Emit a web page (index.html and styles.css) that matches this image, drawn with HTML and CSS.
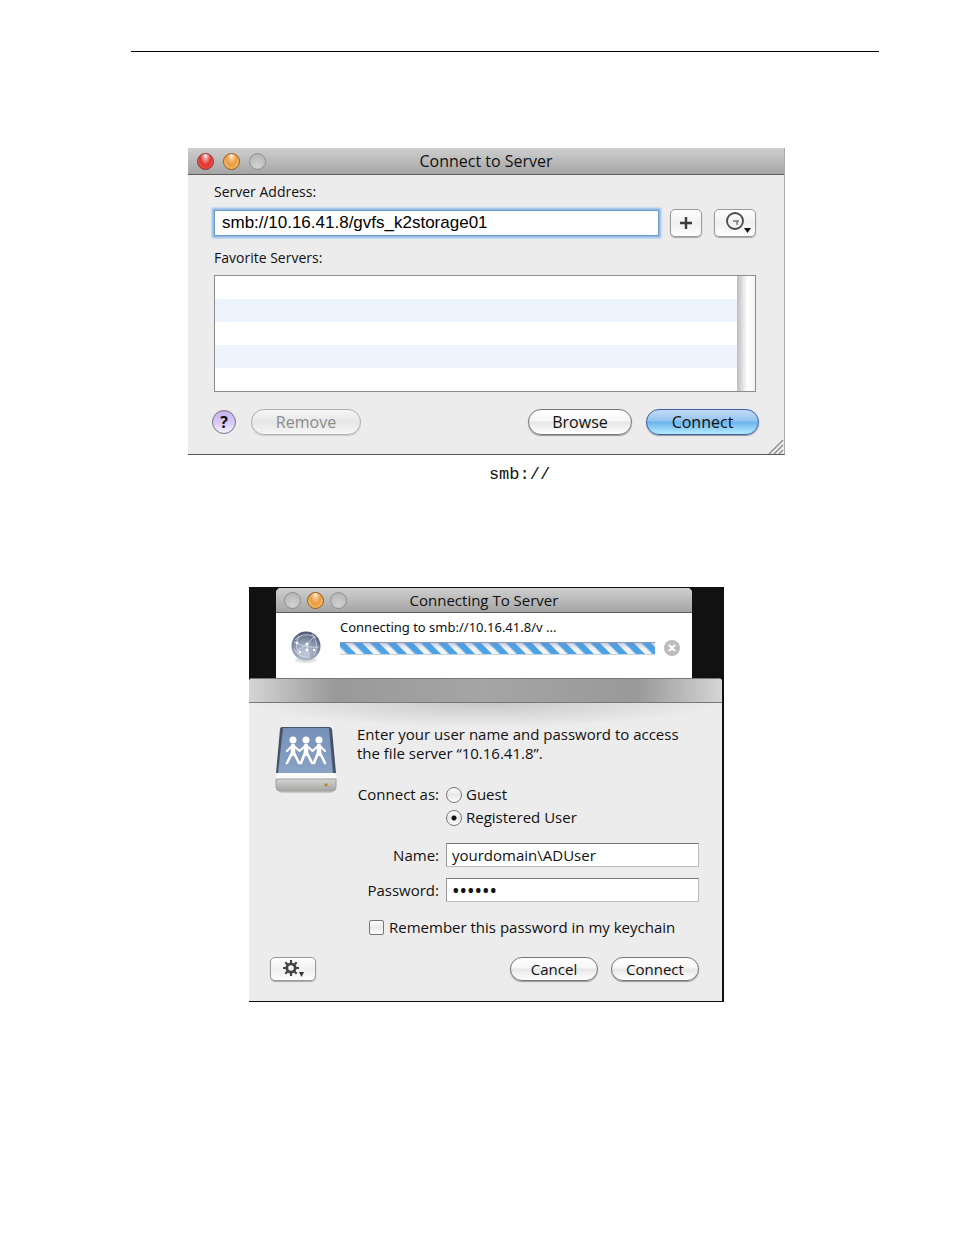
FILE: index.html
```html
<!DOCTYPE html>
<html lang="en">
<head>
    <meta charset="UTF-8">
    <meta name="viewport" content="width=device-width, initial-scale=1.0">
    <title>Connect to Server</title>
    <link rel="stylesheet" href="styles.css">
</head>
<body>
    <main class="page">
        <hr class="page-rule">

        <section class="window">
            <header class="titlebar">
                <div class="lights">
                    <span class="light red"></span>
                    <span class="light amber"></span>
                    <span class="light"></span>
                </div>
                <h1>Connect to Server</h1>
            </header>
            <form class="window-body">
                <label class="small-label" for="address">Server Address:</label>
                <div class="address-row">
                    <input type="text" id="address" class="address-input" value="smb://10.16.41.8/gvfs_k2storage01">
                    <button type="button" class="square-btn add-btn" aria-label="Add to favorites">
                        <svg width="14" height="14" viewBox="0 0 14 14"><path d="M7 1v12M1 7h12" stroke="#3c3c3c" stroke-width="2.4"/></svg>
                    </button>
                    <button type="button" class="square-btn recent-btn" aria-label="Recent servers">
                        <svg width="32" height="24" viewBox="0 0 32 24">
                            <circle cx="16" cy="10" r="8" fill="none" stroke="#4a4a4a" stroke-width="1.8"/>
                            <path d="M14 10h6M18 10v4" fill="none" stroke="#777" stroke-width="1.4"/>
                            <path d="M25 17h7l-3.500 5z" fill="#111"/>
                        </svg>
                    </button>
                </div>
                <span class="small-label">Favorite Servers:</span>
                <div class="favorites">
                    <ul class="favorites-list">
                        <li></li>
                        <li></li>
                        <li></li>
                        <li></li>
                        <li></li>
                    </ul>
                    <div class="scroll-track"></div>
                </div>
                <footer class="window-actions">
                    <button type="button" class="help-btn">?</button>
                    <button type="button" class="pill-btn remove-btn" disabled>Remove</button>
                    <button type="button" class="pill-btn browse-btn">Browse</button>
                    <button type="submit" class="pill-btn default-btn">Connect</button>
                </footer>
            </form>
            <svg class="grip" width="16" height="16" viewBox="0 0 16 16"><path d="M1 16L15 2M6 16l9-9M11 16l4-4" stroke="#8a8a8a" stroke-width="1.4"/></svg>
        </section>

        <p class="code-line"><code>smb://</code></p>

        <section class="desktop">
            <div class="progress-window">
                <header class="titlebar">
                    <div class="lights">
                        <span class="light"></span>
                        <span class="light amber"></span>
                        <span class="light"></span>
                    </div>
                    <h2>Connecting To Server</h2>
                </header>
                <div class="progress-body">
                    <svg class="globe" width="32" height="34" viewBox="0 0 32 34">
                        <defs>
                            <radialGradient id="globeFill" cx="45%" cy="75%" r="75%">
                                <stop offset="0" stop-color="#c3cddd"/>
                                <stop offset="0.6" stop-color="#8793ac"/>
                                <stop offset="1" stop-color="#4b566c"/>
                            </radialGradient>
                        </defs>
                        <ellipse cx="16" cy="29" rx="11" ry="3" fill="#e2e2e2"/>
                        <circle cx="16" cy="15" r="14.500" fill="url(#globeFill)"/>
                        <path d="M5 9c6-6 15-7 21-2M4 11c8 4 16 6 25 5M9 5c-4 7-3 14 2 21M17 13L7 20M17 13l8-8M17 13l2 15M4 18c3 6 9 8 14 8M22 3c5 7 6 14 2 21" fill="none" stroke="#d9e0ec" stroke-width="0.8"/>
                        <g fill="#fff"><circle cx="17" cy="13" r="1.600"/><circle cx="7" cy="12" r="1.300"/><circle cx="24" cy="19" r="1.200"/><circle cx="17" cy="19" r="1.400"/><circle cx="10" cy="21" r="1.200"/></g>
                    </svg>
                    <div class="progress-main">
                        <p>Connecting to smb://10.16.41.8/v ...</p>
                        <div class="progress-bar" role="progressbar" aria-label="Connecting"></div>
                    </div>
                    <button type="button" class="stop-btn" aria-label="Stop">
                        <svg width="16" height="16" viewBox="0 0 16 16"><circle cx="8" cy="8" r="8" fill="#bcbcbc"/><path d="M5 5l6 6M11 5l-6 6" stroke="#fff" stroke-width="2"/></svg>
                    </button>
                </div>
            </div>

            <form class="sheet">
                <div class="sheet-top"></div>
                <div class="sheet-body">
                    <div class="intro">
                        <svg class="drive" width="62" height="68" viewBox="0 0 62 68">
                            <defs>
                                <linearGradient id="driveTop" x1="0" y1="0" x2="0" y2="1">
                                    <stop offset="0" stop-color="#7690b8"/>
                                    <stop offset="1" stop-color="#89a3c6"/>
                                </linearGradient>
                                <linearGradient id="driveFront" x1="0" y1="0" x2="0" y2="1">
                                    <stop offset="0" stop-color="#d5d5d3"/>
                                    <stop offset="1" stop-color="#a4a4a2"/>
                                </linearGradient>
                            </defs>
                            <path d="M2 60h58v5q-2 3-6 3H8q-4 0-6-3z" fill="#c9c9c9"/>
                            <path d="M7 2h47q2 0 3 2l4 44H1L5 4q0-2 2-2z" fill="#465365"/>
                            <path d="M8 3h46l4 45H3z" fill="url(#driveTop)"/>
                            <path d="M2 48h58l1 6H1z" fill="#fafafa"/>
                            <path d="M1 54h60v8q0 4-4 4H5q-4 0-4-4z" fill="url(#driveFront)" stroke="#a0a09e"/>
                            <circle cx="51" cy="60" r="1.800" fill="#c38a30"/>
                            <g fill="#fff"><circle cx="18" cy="15" r="3.500"/><circle cx="31" cy="15" r="3.500"/><circle cx="44" cy="15" r="3.500"/></g>
                            <g fill="none" stroke="#fff" stroke-linecap="round" stroke-linejoin="round">
                                <path d="M12 26l5-5h2l5.500 5 5.500-5h2l5.500 5 5.500-5h2l5 5" stroke-width="2.200"/>
                                <path d="M18 21v8M31 21v8M44 21v8" stroke-width="4.500"/>
                                <path d="M17 28l-5 10M19 28l5 10M30 28l-4 10M32 28l5 10M43 28l-4 10M45 28l5 10" stroke-width="2.600"/>
                            </g>
                        </svg>
                        <p>Enter your user name and password to access<br>the file server “10.16.41.8”.</p>
                    </div>

                    <div class="fields">
                        <span class="field-label connect-as">Connect as:</span>
                        <div class="radio-group">
                            <label><input type="radio" name="connect_as" value="guest">Guest</label>
                            <label><input type="radio" name="connect_as" value="registered" checked>Registered User</label>
                        </div>

                        <label class="field-label" for="name">Name:</label>
                        <input type="text" id="name" class="text-input" value="yourdomain\ADUser">

                        <label class="field-label" for="password">Password:</label>
                        <input type="password" id="password" class="text-input" value="secret">
                    </div>

                    <label class="remember"><input type="checkbox">Remember this password in my keychain</label>

                    <footer class="sheet-actions">
                        <button type="button" class="square-btn gear-btn" aria-label="Options">
                            <svg width="30" height="18" viewBox="0 0 30 18">
                                <circle cx="13" cy="8" r="4.200" fill="none" stroke="#444" stroke-width="2.800"/>
                                <path d="M13 0v3M13 13v3M5 8h3M18 8h3M7.300 2.300l2.200 2.200M16.500 11.500l2.200 2.200M7.300 13.700l2.200-2.200M16.500 4.500l2.200-2.200" stroke="#444" stroke-width="2.200"/>
                                <path d="M21 12h5l-2.500 5z" fill="#333"/>
                            </svg>
                        </button>
                        <button type="button" class="pill-btn">Cancel</button>
                        <button type="submit" class="pill-btn">Connect</button>
                    </footer>
                </div>
            </form>
        </section>
    </main>
</body>
</html>
```

FILE: styles.css
```css
:root {
    --window-color: #ececec;
    --text-color: #111;
    --edge-color: #8c8c8c;
}

* {
    margin: 0;
    padding: 0;
    box-sizing: border-box;
}

body {
    font-family: 'Open Sans', 'Noto Sans', sans-serif;
    font-size: 15px;
    line-height: 19px;
    color: var(--text-color);
    background: #fff;
}

button,
input {
    font: inherit;
    color: inherit;
}

svg {
    display: block;
}

.page {
    padding: 51px 75px 48px 131px;
}

.page-rule {
    border: none;
    border-top: 1px solid #000;
    margin-bottom: 96px;
}

/* Connect to Server window */
.window {
    position: relative;
    max-width: 597px;
    margin: 0 94px 0 57px;
    background: var(--window-color);
    border-right: 1px solid #aaa;
    border-bottom: 1px solid #555;
}

.titlebar {
    position: relative;
    display: flex;
    align-items: center;
    justify-content: center;
    height: 27px;
    background: linear-gradient(#cfcfcf, #a5a5a5);
    border-bottom: 1px solid #5c5c5c;
}

.titlebar h1,
.titlebar h2 {
    font-size: 16px;
    font-weight: 400;
    line-height: 24px;
}

.titlebar h2 {
    font-size: 15px;
}

.lights {
    position: absolute;
    left: 9px;
    display: flex;
    gap: 9px;
}

.light {
    width: 17px;
    height: 17px;
    border-radius: 50%;
    border: 1px solid #8f8f8f;
    background: radial-gradient(circle at 50% 80%, #d2d2d2, #b0b0b0);
}

.light.red {
    border-color: #8c3330;
    background: radial-gradient(ellipse at 50% 12%, #fff 0, #f4a09a 18%, #e0352f 50%, #f5625a 100%);
}

.light.amber {
    border-color: #94561f;
    background: radial-gradient(ellipse at 50% 12%, #fff 0, #f7c88c 18%, #e99a41 50%, #ffdf87 100%);
}

.window-body {
    padding: 8px 28px 19px 26px;
}

.small-label {
    display: block;
    font-size: 14px;
    line-height: 18px;
}

.address-row {
    display: flex;
    align-items: center;
    height: 28px;
    margin: 8px 0 12px;
}

.address-input {
    flex: 1;
    min-width: 0;
    height: 26px;
    padding: 0 7px;
    margin-right: 11px;
    border: 1px solid #6b9ccd;
    box-shadow: 0 0 2px 2px #8db8e6;
    outline: none;
    background: #fff;
    font-family: 'Liberation Sans', Arial, sans-serif;
    font-size: 17px;
    color: #000;
}

.square-btn {
    display: flex;
    align-items: center;
    justify-content: center;
    height: 28px;
    border: 1px solid #999;
    border-radius: 5px;
    background: linear-gradient(#fff, #f0f0f0 50%, #fdfdfd);
    box-shadow: 0 1px 1px #aaa;
}

.add-btn {
    width: 32px;
    margin-right: 12px;
}

.recent-btn {
    width: 42px;
}

.favorites {
    display: flex;
    margin-top: 8px;
    background: #fff;
    border: 1px solid var(--edge-color);
}

.favorites-list {
    flex: 1;
    list-style: none;
}

.favorites-list li {
    height: 23px;
}

.favorites-list li:nth-child(even) {
    background: #edf4fd;
}

.scroll-track {
    width: 18px;
    background: linear-gradient(90deg, #bcbcbc, #ececec 40%, #fff 60%, #f4f4f4);
}

.window-actions {
    display: flex;
    align-items: center;
    margin: 17px -3px 0 -2px;
}

.pill-btn {
    width: 88px;
    height: 24px;
    border: 1px solid #767676;
    border-radius: 12px;
    background: linear-gradient(#fff, #f7f7f7 45%, #e6e6e6 50%, #fff);
    box-shadow: 0 1px 1px #999;
    line-height: 20px;
}

.window-actions .pill-btn {
    height: 26px;
    border-radius: 13px;
    font-size: 16px;
}

.help-btn {
    width: 24px;
    height: 24px;
    margin-right: 15px;
    border: 1px solid #77718a;
    border-radius: 50%;
    background: linear-gradient(#c4b3ea, #d6c8f5 50%, #f5f0ff);
    font-size: 16px;
    font-weight: 700;
    line-height: 20px;
}

.window-actions .remove-btn {
    width: 110px;
    border-color: #b0b0b0;
    box-shadow: 0 1px 1px #ccc;
    background: linear-gradient(#f6f6f6, #e6e6e6 50%, #f6f6f6);
    color: #8c8c8c;
}

.window-actions .browse-btn {
    width: 104px;
    margin: 0 14px 0 auto;
}

.window-actions .default-btn {
    width: 113px;
    border-color: #3b5fa3;
    background: linear-gradient(#c5dcf6, #94c3ef 45%, #6bb3ee 50%, #b5ecff);
}

.grip {
    position: absolute;
    right: 0;
    bottom: 0;
}

.code-line {
    max-width: 597px;
    margin: 8px 94px 102px 57px;
    text-align: center;
    padding-left: 66px;
    line-height: 20px;
}

.code-line code {
    font-family: 'Liberation Mono', 'Courier New', monospace;
    font-size: 17px;
}

/* Connecting To Server */
.desktop {
    max-width: 475px;
    margin: 0 155px 0 118px;
    padding: 1px 2px 1px 0;
    background: #111;
}

.progress-window {
    margin: 0 30px 0 27px;
    background: #fff;
    border-radius: 5px 5px 0 0;
    overflow: hidden;
}

.progress-window .titlebar {
    height: 25px;
}

.progress-window .lights {
    left: 8px;
    gap: 6px;
}

.progress-body {
    display: flex;
    align-items: flex-start;
    height: 65px;
    padding: 5px 12px 0 14px;
}

.globe {
    margin: 13px 18px 0 0;
}

.progress-main {
    flex: 1;
}

.progress-main p {
    font-family: 'Noto Sans', sans-serif;
    font-size: 13px;
}

.progress-bar {
    height: 13px;
    margin-top: 5px;
    border-top: 1px solid #8c99b8;
    border-bottom: 1px solid #c9d3dd;
    background:
        linear-gradient(rgba(120, 130, 190, 0.35), transparent 50%),
        repeating-linear-gradient(45deg, #f3f3f3 0, #f3f3f3 4px, #4ba3e5 6px, #4ba3e5 11px, #f3f3f3 12px);
}

.stop-btn {
    margin: 22px 0 0 9px;
    border: none;
    background: none;
}

.sheet {
    background: var(--window-color);
    border-radius: 4px 4px 0 0;
    overflow: hidden;
}

.sheet-top {
    height: 25px;
    border-top: 1px solid #777;
    border-bottom: 1px solid #777;
    background: linear-gradient(90deg, #d5d5d5, #999 18%, #a5a5a5 50%, #999 82%, #d5d5d5);
}

.sheet-body {
    padding: 22px 23px 20px 21px;
    background: radial-gradient(ellipse 50% 24px at 50% 0, #c8c8c8, #ececec);
}

.intro {
    display: flex;
    gap: 20px;
    margin-left: 5px;
}

.drive {
    flex: none;
}

.fields {
    display: grid;
    grid-template-columns: 169px 1fr;
    gap: 11px 7px;
    align-items: center;
    margin-top: -10px;
}

.field-label {
    text-align: right;
}

.connect-as {
    align-self: start;
    line-height: 23px;
}

.radio-group {
    margin-bottom: 3px;
}

.radio-group label {
    display: flex;
    align-items: center;
    gap: 4px;
    height: 23px;
}

input[type="radio"] {
    appearance: none;
    width: 16px;
    height: 16px;
    border: 1px solid #777;
    border-radius: 50%;
    background: linear-gradient(#fff, #e6e6e6 50%, #fff);
}

input[type="radio"]:checked {
    background: radial-gradient(circle, #111 0, #111 2px, transparent 3px), linear-gradient(#fff, #e6e6e6 50%, #fff);
}

.text-input {
    width: 100%;
    height: 24px;
    padding: 0 5px;
    border: 1px solid #bbb;
    border-top-color: #777;
    border-left-color: #999;
    background: #fff;
}

.text-input[type="password"] {
    font-family: 'Noto Sans', sans-serif;
    font-size: 20px;
}

.remember {
    display: flex;
    align-items: center;
    gap: 5px;
    margin: 16px 0 20px 99px;
}

input[type="checkbox"] {
    appearance: none;
    width: 15px;
    height: 15px;
    border: 1px solid #777;
    border-radius: 2px;
    background: linear-gradient(#fff, #ebebeb 50%, #fff);
}

.sheet-actions {
    display: flex;
    gap: 13px;
}

.gear-btn {
    width: 46px;
    height: 24px;
    margin-right: auto;
}
```
